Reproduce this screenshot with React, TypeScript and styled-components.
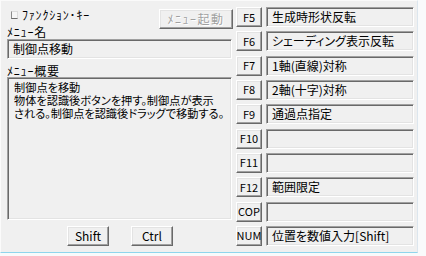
import styled, { createGlobalStyle } from "styled-components";

const GlobalStyle = createGlobalStyle`
  html, body {
    margin: 0;
    padding: 0;
    background: #f9fafb;
  }
  body {
    font-family: "Noto Sans CJK JP", "Liberation Sans", sans-serif;
    font-size: 12px;
    color: #000;
  }
`;

const keys = [
  { key: "F5", text: "生成時形状反転" },
  { key: "F6", text: "シェーディング表示反転" },
  { key: "F7", text: "1軸(直線)対称" },
  { key: "F8", text: "2軸(十字)対称" },
  { key: "F9", text: "通過点指定" },
  { key: "F10", text: "" },
  { key: "F11", text: "" },
  { key: "F12", text: "範囲限定" },
  { key: "COP", text: "" },
  { key: "NUM", text: "位置を数値入力[Shift]" },
];

function App() {
  return (
    <>
      <GlobalStyle />
      <Window>
        <LeftPanel>
          <TopRow>
            <LeftStack>
              <CheckRow>
                <CheckBox />
                <span>ﾌｧﾝｸｼｮﾝ･ｷｰ</span>
              </CheckRow>
              <Label>ﾒﾆｭｰ名</Label>
            </LeftStack>
            <LaunchButton disabled>ﾒﾆｭｰ起動</LaunchButton>
          </TopRow>
          <NameBox>制御点移動</NameBox>
          <Label $top={5}>ﾒﾆｭｰ概要</Label>
          <DescBox>
            <DescLine>制御点を移動</DescLine>
            <DescLine>物体を認識後ボタンを押す。制御点が表示</DescLine>
            <DescLine>される。制御点を認識後ドラッグで移動する。</DescLine>
          </DescBox>
          <ButtonRow>
            <ModButton $left={60}>Shift</ModButton>
            <ModButton $left={22}>Ctrl</ModButton>
          </ButtonRow>
        </LeftPanel>
        <KeyGrid>
          {keys.map((k) => (
            <KeyRow key={k.key}>
              <KeyButton>{k.key}</KeyButton>
              <Field>{k.text}</Field>
            </KeyRow>
          ))}
        </KeyGrid>
      </Window>
    </>
  );
}

const Window = styled.div`
  width: 418px;
  height: 253px;
  box-sizing: border-box;
  background: #f0f0f0;
  border-top: 1px solid #fafafa;
  border-left: 1px solid #fbfbfb;
  border-right: 1px solid #dce6ee;
  border-bottom: 1px solid #8fd5ec;
  display: flex;
  font-feature-settings: "palt";
`;

const LeftPanel = styled.div`
  width: 235px;
  box-sizing: border-box;
  padding: 0 3px 0 6px;
  display: flex;
  flex-direction: column;
`;

const TopRow = styled.div`
  display: flex;
  justify-content: space-between;
  align-items: flex-start;
  height: 38px;
`;

const LeftStack = styled.div`
  display: flex;
  flex-direction: column;
`;

const CheckRow = styled.div`
  display: flex;
  align-items: center;
  gap: 4px;
  margin-top: 7px;
  height: 13px;
  line-height: 13px;
  padding-left: 4px;
  letter-spacing: 0.8px;
`;

const CheckBox = styled.span`
  display: block;
  width: 7px;
  height: 8px;
  box-sizing: border-box;
  background: #f6f6f6;
  border-left: 1px solid #8c8c8c;
  border-bottom: 1px solid #6e6e6e;
  border-top: 1px solid #dcdcdc;
  border-right: 1px solid #dcdcdc;
`;

const Label = styled.div<{ $top?: number }>`
  margin-top: ${(p) => p.$top ?? 4}px;
  height: 13px;
  line-height: 13px;
  white-space: nowrap;
  letter-spacing: 0.8px;
`;

const raised = `
  box-sizing: border-box;
  background: #f0f0f0;
  border: 1px solid;
  border-color: #ffffff #696969 #696969 #ffffff;
  box-shadow: inset -1px -1px 0 #a0a0a0, inset 1px 1px 0 #e3e3e3;
  padding: 0 0 1px 0;
  margin: 0;
  height: 20px;
  display: flex;
  align-items: center;
  justify-content: center;
  white-space: nowrap;
  color: #000;
  cursor: default;
`;

const LaunchButton = styled.button`
  ${raised}
  width: 74px;
  margin-top: 8px;
  font-family: "Noto Sans CJK JP", sans-serif;
  font-size: 12px;
  letter-spacing: 1.5px;
  color: #a0a0a0;
  text-shadow: 1px 1px 0 #ffffff;
  &:disabled {
    color: #a0a0a0;
  }
`;

const sunken = `
  box-sizing: border-box;
  background: #f0f0f0;
  border: 1px solid;
  border-color: #a0a0a0 #ffffff #ffffff #a0a0a0;
  box-shadow: inset 1px 1px 0 #696969, inset -1px -1px 0 #e3e3e3;
`;

const NameBox = styled.div`
  ${sunken}
  width: 225px;
  height: 20px;
  line-height: 18px;
  padding-left: 5px;
  white-space: nowrap;
`;

const DescBox = styled.div`
  ${sunken}
  width: 225px;
  height: 143px;
  padding: 3px 0 0 6px;
  white-space: nowrap;
  overflow: hidden;
`;

const DescLine = styled.div`
  font-size: 11.2px;
  line-height: 13px;
  height: 13px;
`;

const ButtonRow = styled.div`
  display: flex;
  margin-top: 6px;
`;

const ModButton = styled.button<{ $left: number }>`
  ${raised}
  width: 42px;
  margin-left: ${(p) => p.$left}px;
  font-family: "Noto Sans CJK JP", sans-serif;
  font-size: 12px;
`;

const KeyGrid = styled.div`
  display: flex;
  flex-direction: column;
  gap: 4.33px;
  padding-top: 6px;
`;

const KeyRow = styled.div`
  display: grid;
  grid-template-columns: 26px 148px;
  column-gap: 4px;
  height: 20px;
`;

const KeyButton = styled.div`
  ${raised}
  font-size: 11px;
`;

const Field = styled.div`
  ${sunken}
  height: 20px;
  line-height: 18px;
  padding-left: 5px;
  white-space: nowrap;
  overflow: hidden;
`;

export default App;
